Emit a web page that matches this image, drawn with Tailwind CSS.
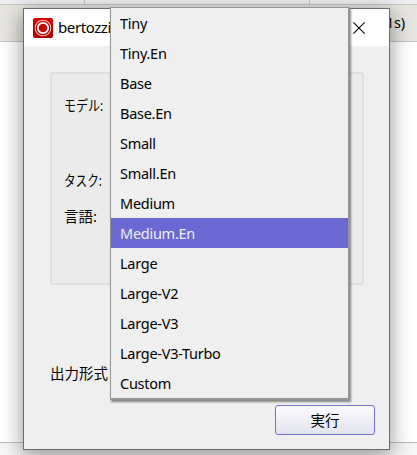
<!DOCTYPE html>
<html lang="ja">
<head>
<meta charset="utf-8">
<title>bertozzi</title>
<script src="https://cdn.jsdelivr.net/npm/@tailwindcss/browser@4"></script>
</head>
<body class="relative h-[455px] w-[417px] overflow-hidden bg-white text-[14.5px] text-black font-['Noto_Sans','Noto_Sans_CJK_JP',sans-serif]">
<!-- Main window behind the dialog -->
<div class="flex h-full flex-col">
  <div class="flex h-[5px] border-b border-[#c4c4c4] bg-[#efefef]">
    <div class="w-[85px] border-r border-[#c4c4c4]"></div>
    <div class="w-[225px] border-r border-[#c4c4c4]"></div>
  </div>
  <div class="flex h-[37px] items-center justify-end border-b border-[#c2c2c6] bg-[#e6e5e0] pr-[12px]"><span class="mt-[-1px] text-[14.5px] tracking-[-0.2px]">(1s)</span></div>
  <div class="flex-1"></div>
  <div class="h-[13px] border-t border-[#bcbcbc] bg-[#f6f6f6]"></div>
</div>

<!-- Dialog -->
<div class="absolute left-[23px] top-[8px] flex h-[442px] w-[367px] flex-col border border-[#6b6b6b] bg-[#efefef] shadow-[0_5px_20px_1px_rgba(0,0,0,0.4)]">
  <header class="flex h-[37px] shrink-0 items-center bg-white pl-[9px] pr-[24px]">
    <svg class="h-5 w-5 shrink-0" viewBox="0 0 20 20">
      <defs><linearGradient id="r" x1="0" y1="0" x2="0" y2="1"><stop offset="0" stop-color="#d90000"/><stop offset="1" stop-color="#a90000"/></linearGradient></defs>
      <rect width="20" height="20" rx="2" fill="url(#r)"/>
      <circle cx="10" cy="10" r="7.8" fill="none" stroke="#f3baba" stroke-width="1.1"/>
      <circle cx="10" cy="10" r="5.2" fill="#c40808" stroke="#fff" stroke-width="1.8"/>
    </svg>
    <span class="ml-[5px] text-[15px] tracking-[-0.4px]">bertozzi</span>
    <svg class="ml-auto h-[12px] w-[12px]" viewBox="0 0 12 12"><path d="M.4.4 11.6 11.6M11.6.4.4 11.6" stroke="#000" stroke-width="1.1" fill="none"/></svg>
  </header>
  <section class="ml-[26px] mt-[26px] flex h-[213px] w-[314px] shrink-0 flex-col items-start rounded-[3px] border-2 border-[#dfdfdf] bg-[#ebebeb] pl-[12px] pt-[21px] leading-5">
    <span class="origin-left scale-x-[.83] whitespace-nowrap">モデル:</span>
    <span class="mt-[55px] origin-left scale-x-[.8] whitespace-nowrap">タスク:</span>
    <span class="mt-[16px] whitespace-nowrap">言語:</span>
  </section>
  <div class="ml-[26px] mt-[78px] h-5 whitespace-nowrap leading-5">出力形式</div>
  <button class="ml-auto mr-[14px] mt-[22px] h-[30px] w-[100px] shrink-0 rounded-[3px] border border-[#7272cf] bg-linear-to-b from-[#fbfbfe] to-[#e3e3ed] text-[14.5px] leading-7">実行</button>
</div>

<!-- Model list -->
<ul class="absolute left-[110px] top-[7px] h-[393px] w-[240px] border-b-2 border-l border-r-2 border-t border-[#949494] bg-[#efefef] text-[14.5px] leading-[30px] tracking-[-0.27px] shadow-[1px_2px_2px_rgba(0,0,0,0.45)] *:h-[30px] *:pl-[9px]">
  <li>Tiny</li>
  <li>Tiny.En</li>
  <li>Base</li>
  <li>Base.En</li>
  <li>Small</li>
  <li>Small.En</li>
  <li>Medium</li>
  <li class="bg-[#6a69d4] text-[#efefef]">Medium.En</li>
  <li>Large</li>
  <li>Large-V2</li>
  <li>Large-V3</li>
  <li>Large-V3-Turbo</li>
  <li>Custom</li>
</ul>
</body>
</html>
